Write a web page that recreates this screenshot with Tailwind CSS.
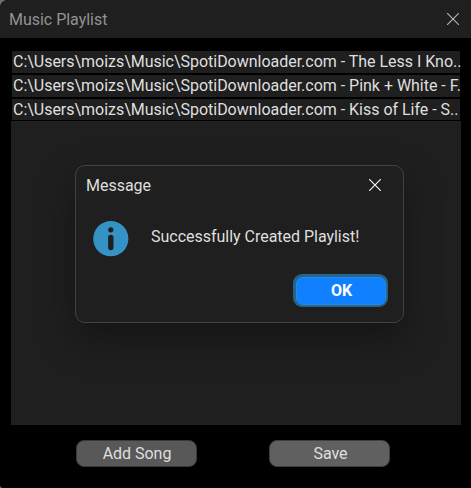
<!DOCTYPE html>
<html lang="en">
<head>
<meta charset="utf-8">
<title>Music Playlist</title>
<script src="https://cdn.jsdelivr.net/npm/@tailwindcss/browser@4"></script>
</head>
<body class="bg-[#707070] font-[Roboto,sans-serif] text-[16px] tracking-[-0.02px] text-[#dfdfdf]">
<main class="relative flex h-[488px] w-[471px] flex-col overflow-hidden rounded-tl-[8px] rounded-bl-[3px] bg-black">
  <header class="flex h-[38px] shrink-0 items-center justify-between bg-[#1f1f1f] pr-[12px] pl-[9px] text-[#929292]">
    <h1 class="leading-[38px] pt-[2px]">Music Playlist</h1>
    <svg class="size-[12px]" viewBox="0 0 12 12" fill="none" stroke="#b5b5b5" stroke-width="1.1"><path d="M0 0L12 12M12 0L0 12"/></svg>
  </header>
  <section class="mx-[11px] mt-[13px] flex w-[450px] flex-col whitespace-nowrap leading-[22px]">
    <div class="mx-px mb-[2px] h-[22px] w-[448px] bg-[#1f1f1f] pl-px">C:\Users\moizs\Music\SpotiDownloader.com - The Less I Kno..</div>
    <div class="mx-px mb-[2px] h-[22px] w-[448px] bg-[#1f1f1f] pl-px">C:\Users\moizs\Music\SpotiDownloader.com - Pink + White - F.</div>
    <div class="mx-px mb-px h-[21px] w-[448px] bg-[#1f1f1f] pl-px">C:\Users\moizs\Music\SpotiDownloader.com - Kiss of Life - S..</div>
    <div class="h-[304px] bg-[#1f1f1f]"></div>
  </section>
  <footer class="mt-[15px] flex gap-[72px] pl-[76px]">
    <button class="h-[27px] w-[121px] rounded-[8px] border border-[#393939] bg-[#585858] pl-px leading-[25px]">Add Song</button>
    <button class="h-[27px] w-[121px] rounded-[8px] border border-[#404040] bg-[#606060] pl-[2px] leading-[25px]">Save</button>
  </footer>
  <div role="dialog" class="absolute top-[165px] left-[75px] flex h-[158px] w-[329px] flex-col rounded-[10px] border border-[#424242] bg-[#1f1f1f] shadow-[0_16px_36px_rgba(0,0,0,0.35)]">
    <div class="flex h-[38px] items-center justify-between pr-[22px] pl-[10px]">
      <h2 class="pt-[2px]">Message</h2>
      <svg class="size-[12px]" viewBox="0 0 12 12" fill="none" stroke="#f0f0f0" stroke-width="1.2"><path d="M0 0L12 12M12 0L0 12"/></svg>
    </div>
    <div class="mt-[17px] flex h-[36px] pl-[17px]">
      <svg class="size-[36px] shrink-0" viewBox="0 0 36 36"><circle cx="17.8" cy="17.7" r="17.6" fill="#3592c4"/><circle cx="17.8" cy="8.8" r="2.6" fill="#1f1f1f"/><rect x="15.1" y="13.8" width="5.4" height="15.4" rx="2.7" fill="#1f1f1f"/></svg>
      <p class="ml-[22px] leading-[32px]">Successfully Created Playlist!</p>
    </div>
    <button class="mt-[17px] ml-[217px] h-[33px] w-[95px] rounded-[9px] bg-[#27648c] p-[2.5px] font-bold text-white"><span class="block h-[28px] rounded-[7px] border border-[#228be6] bg-[#1080ff] pl-[2px] leading-[25px]">OK</span></button>
  </div>
</main>
</body>
</html>
